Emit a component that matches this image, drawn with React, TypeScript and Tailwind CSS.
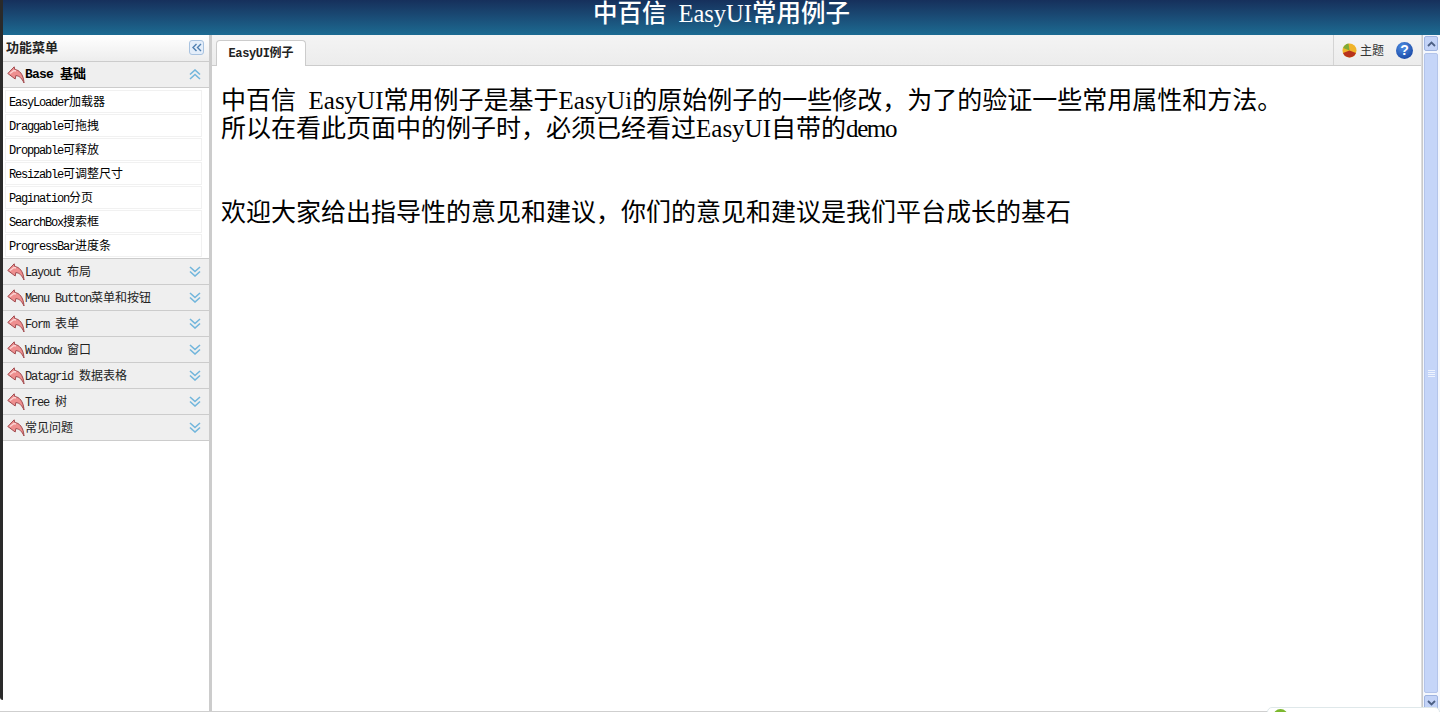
import React from "react";
import clsx from "clsx";

const cjk = "font-['Noto_Sans_CJK_SC','Liberation_Serif',serif]";

// SimSun style half width latin, small sizes
function L({ children, className }: { children: React.ReactNode; className?: string }) {
  return (
    <span className={clsx("font-['Liberation_Mono',monospace] leading-[0]", className ?? "tracking-[-0.1em]")}>
      {children}
    </span>
  );
}

// big text reads better in the serif
function S({ children, className }: { children: React.ReactNode; className?: string }) {
  return <span className={clsx("font-['Liberation_Serif',serif] leading-[0]", className)}>{children}</span>;
}

function BackArrow() {
  return (
    <svg width="18" height="18" viewBox="0 0 18 18" className="shrink-0">
      <path
        d="M.8 7.5 7.2.8 7.8 3.6C12 3.8 16.5 8 17 17 15 12.5 12.5 9.8 8.8 9.6L8.2 13Z"
        fill="#ee8f8f"
        stroke="#a14a4e"
        strokeWidth="1"
        strokeLinejoin="round"
      />
      <path d="M3 7.5 7 4.5 9 5" stroke="#fbd4d4" strokeWidth="1.4" fill="none" />
    </svg>
  );
}

function DoubleChevron({ up, color = "#72b6dc" }: { up?: boolean; color?: string }) {
  return (
    <svg width="12" height="11" viewBox="0 0 12 11">
      <path
        d={up ? "M1 5.5 6 1l5 4.5M1 10 6 5.5 11 10" : "M1 1l5 4.5L11 1M1 5.5 6 10l5-4.5"}
        fill="none"
        stroke={color}
        strokeWidth="1.6"
      />
    </svg>
  );
}

function AccordionHead({ children, open }: { children: React.ReactNode; open?: boolean }) {
  return (
    <div className="h-[26px] flex items-center bg-[#efefef] border-b border-[#cccccc] pl-1 pr-[8px] text-[#222]">
      <BackArrow />
      <div className={open ? "flex-1 text-[13px] font-bold text-black pb-[3px]" : "flex-1 text-[12px] pb-[2px]"}>
        {children}
      </div>
      <DoubleChevron up={open} />
    </div>
  );
}

const baseItems: [string, string][] = [
  ["EasyLoader", "加载器"],
  ["Draggable", "可拖拽"],
  ["Droppable", "可释放"],
  ["Resizable", "可调整尺寸"],
  ["Pagination", "分页"],
  ["SearchBox", "搜索框"],
  ["ProgressBar", "进度条"],
];

const heads: [string, string][] = [
  ["Layout ", "布局"],
  ["Menu Button", "菜单和按钮"],
  ["Form ", "表单"],
  ["Window ", "窗口"],
  ["Datagrid ", "数据表格"],
  ["Tree ", "树"],
  ["", "常见问题"],
];

function Sidebar() {
  return (
    <aside className="w-[206px] shrink-0 bg-white flex flex-col">
      <div className="h-[27px] flex items-center justify-between pl-[3px] pr-[5px] bg-gradient-to-b from-white to-[#ededed] border-b border-[#cccccc]">
        <span className="text-[13px] font-bold text-[#222] pb-[2px]">功能菜单</span>
        <div className="w-[15px] h-[15px] mb-[2px] rounded-[3px] border border-[#a9c3e0] bg-[#e4eefa] flex items-center justify-center">
          <svg width="10" height="9" viewBox="0 0 10 9">
            <path d="M4.5 1 1 4.5 4.5 8M9 1 5.5 4.5 9 8" fill="none" stroke="#4f7fb0" strokeWidth="1.4" />
          </svg>
        </div>
      </div>
      <AccordionHead open>
        <L className="tracking-[-0.06em]">Base </L>基础
      </AccordionHead>
      <div className="h-[171px] pt-[2px] pl-[2px] pr-[7px] border-b border-[#cccccc] flex flex-col">
        {baseItems.map(([en, zh]) => (
          <div
            key={en}
            className="h-[23px] mb-px shrink-0 flex items-center pl-[3px] pb-[2px] border border-[#f1f1f1] text-[12px] text-black"
          >
            <span>
              <L>{en}</L>
              {zh}
            </span>
          </div>
        ))}
      </div>
      {heads.map(([en, zh]) => (
        <AccordionHead key={zh}>
          {en && <L>{en}</L>}
          {zh}
        </AccordionHead>
      ))}
    </aside>
  );
}

function TabBar() {
  return (
    <div className="h-[31px] flex items-end bg-gradient-to-b from-[#f4f4f4] to-[#ececec] border-b border-[#cccccc] pl-1">
      <div className="h-[26px] w-[90px] -mb-px flex items-center justify-center pb-[4px] bg-white border border-b-0 border-[#cccccc] rounded-t-[4px] text-[12px] font-bold text-[#222]">
        <span>
          <L className="tracking-[-0.03em]">EasyUI</L>例子
        </span>
      </div>
      <div className="ml-auto h-full w-[88px] flex items-center border-l border-[#d4d4d4] pl-[8px]">
        <svg width="15" height="15" viewBox="0 0 15 15" className="shrink-0">
          <circle cx="7.5" cy="7.5" r="7" fill="#f0b429" />
          <path d="M7.5 7.5 1 10A7 7 0 0 0 14 10Z" fill="#b8321c" />
          <path d="M7.5 7.5 1.2 5A7 7 0 0 1 6.5.6Z" fill="#7cab38" />
        </svg>
        <span className="ml-[3px] text-[12px] text-[#333]">主题</span>
        <div className="ml-[12px] w-[17px] h-[17px] rounded-full bg-[radial-gradient(circle_at_40%_30%,#4f8fe4,#0c3796)] flex items-center justify-center text-[14px] leading-none font-bold text-white font-['Liberation_Sans',sans-serif]">
          ?
        </div>
      </div>
    </div>
  );
}

function Scrollbar() {
  return (
    <div className="w-[18px] shrink-0 border-l border-[#c9c9c9] bg-[#f4f7fd] flex flex-col items-center pl-px pr-[2px] pt-px gap-[2px]">
      <div className="w-full h-[15px] shrink-0 rounded-[2px] border border-[#9fb4e0] bg-[#c3d3f7] flex items-center justify-center">
        <svg width="9" height="6" viewBox="0 0 9 6">
          <path d="M1 5 4.5 1.5 8 5" fill="none" stroke="#4d6185" strokeWidth="1.8" />
        </svg>
      </div>
      <div className="w-full flex-1 rounded-[2px] border border-[#b3c4ea] bg-[#c5d5f8] flex items-center justify-center">
        <div className="w-[7px] flex flex-col gap-px">
          <div className="h-px bg-[#eef3fe]" />
          <div className="h-px bg-[#eef3fe]" />
          <div className="h-px bg-[#eef3fe]" />
          <div className="h-px bg-[#eef3fe]" />
        </div>
      </div>
      <div className="w-full h-[16px] shrink-0 rounded-[2px] border border-[#9fb4e0] bg-[#c3d3f7] flex items-center justify-center">
        <svg width="9" height="6" viewBox="0 0 9 6">
          <path d="M1 1 4.5 4.5 8 1" fill="none" stroke="#4d6185" strokeWidth="1.8" />
        </svg>
      </div>
    </div>
  );
}

export default function App() {
  return (
    <div className={`relative w-[1440px] h-[712px] overflow-hidden flex flex-col bg-white ${cjk}`}>
      <header className="h-[35px] shrink-0 bg-gradient-to-b from-[#16305c] to-[#1c6b92] flex items-start justify-center pl-[3px] text-[24.5px] font-medium text-white leading-[24px]">
        <span>
          中百信<S className="ml-[12px]">EasyUI</S>常用例子
        </span>
      </header>
      <div className="flex-1 min-h-0 flex pl-[3px] border-b border-[#cfcfcf]">
        <Sidebar />
        <div className="w-[3px] shrink-0 bg-[#cccccc]" />
        <main className="flex-1 min-w-0 flex flex-col border-r border-[#dddddd]">
          <TabBar />
          <div className="flex-1 pt-[18px] pl-[9px] text-[25px] leading-[28px] text-black">
            中百信<S className="ml-[12.5px]">EasyUI</S>常用例子是基于<S>EasyUi</S>的原始例子的一些修改，为了的验证一些常用属性和方法。
            <br />
            所以在看此页面中的例子时，必须已经看过<S>EasyUI</S>自带的<S className="tracking-[-0.055em]">demo</S>
            <br />
            <br />
            <br />
            欢迎大家给出指导性的意见和建议，你们的意见和建议是我们平台成长的基石
          </div>
        </main>
        <Scrollbar />
      </div>

      {/* window edge + notification peeking in at the bottom */}
      <div className="absolute left-0 top-0 w-[3px] h-[700px] bg-[#2a2a2a] rounded-bl-[3px]" />
      <div className="absolute left-[1267px] top-[707px] w-[173px] h-[8px] bg-white border border-[#dfe8ea] rounded-t-[5px]">
        <div className="absolute left-[5px] top-[1px] w-[15px] h-[15px] rounded-full bg-[#7cb82f]" />
      </div>
    </div>
  );
}
